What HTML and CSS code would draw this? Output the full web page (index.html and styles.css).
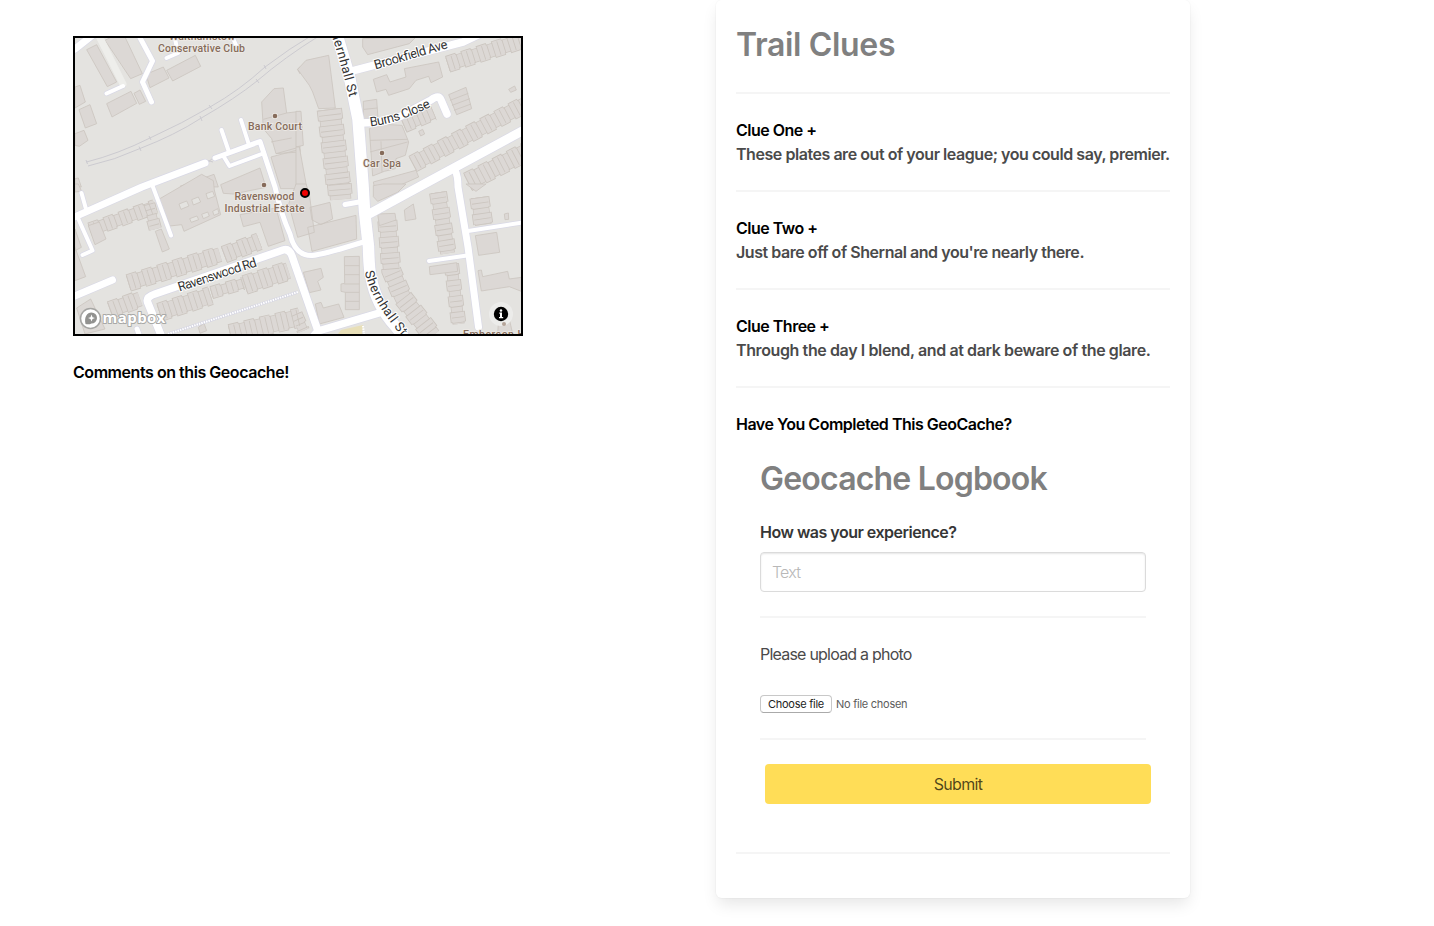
FILE: index.html
```html
<!DOCTYPE html>
<html lang="en">
<head>
<meta charset="utf-8">
<title>Trail Clues</title>
<link rel="stylesheet" href="styles.css">
</head>
<body>
<main class="page">
  <section class="left">
    <div class="map">
      <svg class="map-canvas" viewBox="75 38 446 296" width="446" height="296" role="img" aria-label="Map">
        <defs>
          <g id="blocks">
            <g transform="translate(70 32) scale(.33333)">
              <path d="M50 53L80 38L140 150L112 164ZM105 25L130 12L165 15L217 125L182 140ZM15 165L30 160L46 210L15 228ZM27 233L60 218L80 275L46 288ZM15 305L42 295L54 325L28 343L15 340ZM110 215L183 178L200 214L126 255ZM192 184L210 174L227 208L208 217ZM228 127L280 105L297 138L240 167ZM290 115L376 70L392 103L308 147ZM575 210L612 170L640 168L650 243L690 238L690 360L618 365L605 320L580 290ZM603 375L690 352L690 470L632 470ZM330 463L432 427L445 465ZM15 440L25 438L34 465L15 465ZM682 112L690 105L690 125Z"/>
              <path d="M580 262L650 243M618 365L690 345M603 330L665 318"/>
            </g>
            <g transform="translate(296 32) scale(.33333)">
              <path d="M5 112L30 85L98 70L118 228L68 230L50 180L40 160ZM0 238L15 238L22 340L0 345ZM0 345L10 345L32 465L0 465ZM200 20L360 15L340 35L215 68L200 45ZM232 142L272 128L282 150L330 135L325 110L428 90L440 135L405 152L398 133L360 145L340 170L278 190L270 172L242 180ZM202 208L242 202L246 260L202 262ZM220 290L245 276L318 280L338 330L328 370L300 380L298 410L265 418L230 432ZM368 298L380 292L386 306L374 312ZM638 172L656 162L661 174L644 181ZM458 188L510 166L527 230L482 248ZM232 450L360 415L368 435L300 465L235 465Z"/>
              <path d="M222 325L335 322M222 360L335 330M255 328L258 420M462 205L517 184M468 220L522 200M474 235L525 216M204 232L244 228"/>
            </g>
            <g transform="translate(70 184) scale(.33333)">
              <path d="M55 125L88 114L108 165L75 182ZM256 142L274 135L298 195L277 204ZM15 190L47 278L15 290ZM15 135L34 190L15 200ZM268 45L395 -29L430 -10L433 18L452 92L342 142L335 122L300 126ZM452 2L570 -48L588 10L490 30L460 28ZM510 92L618 72L645 170L595 187L570 115L520 128ZM20 372L62 345L105 435L45 450ZM385 430L402 418L410 440L390 448ZM15 0L25 0L35 22L15 24Z"/>
              <path class="yard" d="M327 60L350 51L357 66L333 76ZM365 47L385 39L392 54L370 63ZM408 29L428 22L434 37L413 45ZM359 104L381 96L386 107L364 115ZM395 91L413 84L418 96L400 104ZM428 82L443 74L447 88L432 94Z"/>
            </g>
            <g transform="translate(296 184) scale(.33333)">
              <path d="M0 0L30 0L40 30L55 145L5 160L-22 60ZM42 70L102 55L110 105L75 122L48 108ZM35 130L180 94L182 165L48 202ZM325 78L352 60L360 105L328 110ZM245 90L297 88L300 108L250 125ZM538 155L602 145L611 205L548 214ZM625 90L637 87L638 106L627 107ZM546 260L556 258L560 278L635 262L640 285L676 280L676 322L640 308L556 321ZM22 265L75 253L82 280L65 292L75 318L40 326ZM58 360L75 355L82 372L128 360L144 400L70 420ZM145 218L190 217L190 377L148 377L148 325L135 322L135 300L146 298ZM400 248L482 236L485 262L402 272ZM610 370L630 360L650 450L605 450ZM232 5L260 0L330 0L305 25L245 52L232 38ZM510 0L570 0L540 22Z"/>
              <path d="M147 245H190M147 272H190M145 300H190M148 325H190M148 352H190"/>
            </g>
          </g>
          <g id="rows">
            <g transform="translate(296 32) scale(.33333)">
              <path class="row w44" d="M455 97L690 22"/>
              <path class="row w46" d="M350 396L690 216"/>
              <path class="row w52" d="M515 450L690 360"/>
              <path class="row w44" d="M322 278L412 240"/>
              <path class="row w66" d="M100 232L128 465"/>
            </g>
            <g transform="translate(70 184) scale(.33333)">
              <path class="row w36" d="M60 138L255 68"/>
              <path class="row w30" d="M236 60L256 135"/>
              <path class="row w46" d="M175 297L450 212"/>
              <path class="row w46" d="M462 212L568 172"/>
              <path class="row w46" d="M120 378L210 345"/>
              <path class="row w48" d="M268 385L422 335"/>
              <path class="row w30" d="M424 326L520 298"/>
              <path class="row w52" d="M524 303L655 260"/>
              <path class="row w52" d="M480 450L690 400"/>
            </g>
            <g transform="translate(296 184) scale(.33333)">
              <path class="row w60" d="M130 0L134 46"/>
              <path class="row w52" d="M274 110L286 260L320 340L410 455"/>
              <path class="row w46" d="M426 25L455 208"/>
              <path class="row w52" d="M550 40L562 122"/>
              <path class="row w36" d="M466 240L488 420"/>
              <path class="row w30" d="M0 390L22 440"/>
            </g>
          </g>
          <g id="roads">
            <path class="road r12" d="M335 30L338 38L349 75L358 119L363 185L364.500 211L368.500 247Q369 270 371 277Q376 305 396 327L406 340"/>
            <path class="road r8" d="M352 71L463 42L480 34"/>
            <path class="road r8" d="M361 123Q385 123 401 116L431 100Q439 94 441 100L447 114"/>
            <path class="road r9" d="M370 213.500L427 182.500L526 129"/>
            <path class="road r7" d="M455 170Q458 176 458 187L468 247L478.500 327"/>
            <path class="road r4" d="M468 231L526 222M429 261L467 255.500"/>
            <path class="road r5" d="M345 204.500L362 201.500M215 158L260 141.500L275 187Q281 214 290 234Q295 256 312 255.500Q322 255 365 241.500"/>
            <path class="road r4" d="M221.500 130L229 152M241 120L249 145M224 157L229.500 166L263 153.500"/>
            <path class="road r7" d="M205 163L142 187L70 219M70 298L112.500 280M99 30L75 49L68 53"/>
            <path class="road r4" d="M153 187L171 235.500M81.500 193L86 209M77.500 217L92.500 250.500L82.500 255M123 86L106.500 93.500M166.500 58L178 53L174 34M231 34L236 45"/>
            <path class="road r8" d="M163 340L147.500 302Q146 297 155 294L283 250Q289 248 292 256L318 331L379 313M318 331L310 340"/>
            <path class="road r5" d="M137 329L141 340M138 34L152.500 61L142.500 82L151.500 102"/>
          </g>
        </defs>
        <rect class="land" x="75" y="38" width="446" height="296"/>
        <path class="park" d="M338 334L341 330L363 325L362 334Z"/>
        <use href="#rows" class="teeth-edge"/>
        <use href="#rows" class="row-edge"/>
        <use href="#rows" class="teeth-fill"/>
        <use href="#rows" class="row-fill"/>
        <use href="#rows" class="row-lines"/>
        <use href="#blocks" class="blocks"/>
        <path class="rail" d="M86.500 162Q118 154 150 138Q183 123 210 107Q240 90 265 67Q290 48 314 34M88 166Q115 160 140 148.500Q175 135 200.500 118.500Q236 98 257 81Q285 57 319 36"/>
        <path class="rail" d="M86 160L87.500 164M149 136L151 140M139 146.500L141 151M209 105L212 109M200 116L202 121M264 65L266 69M256 79L259 83M206 160L213 162M207 163L213 158"/>
        <path class="path-edge" d="M168 334L298 292"/>
        <path class="path-dots" d="M168 334L298 292M363 326L364 334"/>
        <use href="#roads" class="casing"/>
        <path class="service" d="M98 34L123 84"/>
        <use href="#roads" class="surface"/>

        <g class="street">
          <path id="shern-a" d="M331 34L335.500 47L351 103"/>
          <path id="shern-b" d="M365 272Q371 302 406 341"/>
          <path id="brook" d="M375.500 69.500L455 46"/>
          <path id="burns" d="M370.500 126.500Q400 123 436 104"/>
          <path id="raven" d="M179.500 291.500L264 264"/>
          <text><textPath href="#shern-a" textLength="66">hernhall St</textPath></text>
          <text><textPath href="#shern-b" textLength="75">Shernhall St</textPath></text>
          <text><textPath href="#brook" textLength="76">Brookfield Ave</textPath></text>
          <text><textPath href="#burns" textLength="64">Burns Close</textPath></text>
          <text><textPath href="#raven" textLength="82">Ravenswood Rd</textPath></text>
        </g>
        <g class="place">
          <text x="169" y="40" textLength="66">Walthamstow</text>
          <text x="158" y="52" textLength="87">Conservative Club</text>
          <text x="248" y="130" textLength="54">Bank Court</text>
          <text x="363" y="167" textLength="38">Car Spa</text>
          <text x="234.500" y="199.500" textLength="60">Ravenswood</text>
          <text x="224.500" y="211.500" textLength="80">Industrial Estate</text>
          <text x="463" y="338" textLength="62">Emberson H</text>
          <circle cx="275" cy="116" r="2.300"/>
          <circle cx="382" cy="153" r="2.300"/>
          <circle cx="264" cy="185" r="2.300"/>
        </g>
        <circle class="marker" cx="305" cy="193" r="4"/>

        <g class="logo">
          <circle class="logo-ring" cx="90.500" cy="318.500" r="10"/>
          <path class="logo-pin" d="M85.500 324C84 317 87 312.500 91.500 312.500A5.500 5.500 0 0 1 91.500 323.500C89.500 324.500 87.500 324.500 85.500 324Z"/>
          <path class="logo-star" d="M91.500 314.500L92.500 317.200L95 318L92.500 319L91.500 321.500L90.500 319L88 318L90.500 317.200Z"/>
          <text x="102.500" y="323" textLength="63">mapbox</text>
        </g>
        <g class="info">
          <circle class="info-pad" cx="501" cy="314" r="12"/>
          <circle class="info-poi" cx="504" cy="324" r="2"/>
          <circle cx="501" cy="314" r="7.200"/>
          <path class="info-mark" d="M499.300 312.600H502V317H503.200V318.300H499V317H500V313.800H499.300Z"/>
          <circle class="info-mark" cx="501" cy="310.500" r="1.200"/>
        </g>
      </svg>
    </div>
    <p class="strong comments">Comments on this Geocache!</p>
  </section>

  <section class="box">
    <h1 class="title main-title">Trail Clues</h1>
    <hr>
    <div class="clue"><p class="strong">Clue One +</p><p class="hint">These plates are out of your league; you could say, premier.</p></div>
    <hr>
    <div class="clue"><p class="strong">Clue Two +</p><p class="hint">Just bare off of Shernal and you're nearly there.</p></div>
    <hr>
    <div class="clue"><p class="strong">Clue Three +</p><p class="hint hint-wide">Through the day I blend, and at dark beware of the glare.</p></div>
    <hr>
    <p class="strong">Have You Completed This GeoCache?</p>
    <form class="logbook">
      <h2 class="title">Geocache Logbook</h2>
      <label class="label" for="exp">How was your experience?</label>
      <input class="input" id="exp" type="text" placeholder="Text">
      <hr>
      <p class="upload">Please upload a photo</p>
      <div class="file"><button class="file-button" type="button">Choose file</button><span>No file chosen</span></div>
      <hr>
      <button class="submit" type="button">Submit</button>
    </form>
    <hr>
  </section>
</main>
</body>
</html>
```
FILE: styles.css
```css
* { box-sizing: border-box; }
body, h1, h2, p { margin: 0; }
body {
  background: #fff;
  color: #4a4a4a;
  font: 400 16px/24px Inter, "Liberation Sans", sans-serif;
  letter-spacing: -0.5px;
  height: 926px;
  overflow: hidden;
}
.page { display: flex; align-items: flex-start; padding-left: 73px; }
.left { width: 643px; padding-top: 36px; }
.map { width: 450px; height: 300px; border: 2px solid #000; overflow: hidden; }
.map-canvas { display: block; }
.comments { margin-top: 24px; letter-spacing: -0.45px; }
.strong { color: #000; font-weight: 600; }
.hint { font-weight: 600; white-space: nowrap; letter-spacing: -0.45px; }
.hint-wide { letter-spacing: -0.39px; }

.box {
  width: 474px;
  height: 898px;
  padding: 20px;
  border-radius: 6px;
  box-shadow: 0 8px 16px -2px rgba(10,10,10,.1), 0 0 0 1px rgba(10,10,10,.02);
}
hr { height: 2px; margin: 24px 0; border: 0; background: #f5f5f5; }
.title {
  height: 36px;
  padding-top: 1px;
  color: #808080;
  font-size: 32px;
  line-height: 36px;
  font-weight: 600;
  letter-spacing: -0.8px;
}
.main-title { height: 48px; line-height: 48px; letter-spacing: -0.35px; }
.logbook { padding: 24px; }
.label { display: block; margin: 24px 0 8px; color: #363636; font-weight: 600; }
.input {
  display: block;
  width: 100%;
  height: 40px;
  padding: 0 11px;
  border: 1px solid #dbdbdb;
  border-radius: 4px;
  box-shadow: inset 0 1px 2px rgba(10,10,10,.1);
  font: inherit;
  font-weight: 300;
  letter-spacing: -0.8px;
}
.input::placeholder { color: #b8b8b8; opacity: 1; }
.upload { letter-spacing: -0.78px; }
.file {
  display: flex;
  align-items: center;
  gap: 4px;
  height: 18px;
  margin: 29px 0 25px;
  font-size: 11px;
  letter-spacing: -0.26px;
  color: #5c5c5c;
}
.file-button {
  width: 72px;
  height: 18px;
  padding: 0;
  border: 1px solid #c8c8c8;
  border-bottom-color: #aaa;
  border-radius: 4px;
  background: #fff;
  color: #222;
  font: inherit;
  line-height: 16px;
  letter-spacing: inherit;
}
.submit {
  display: block;
  width: 100%;
  height: 40px;
  position: relative;
  left: 5px;
  border: 0;
  border-radius: 4px;
  background: #ffdd57;
  color: rgba(0,0,0,.7);
  font: inherit;
  letter-spacing: -0.65px;
}

.land { fill: #e4e3e0; }
.park { fill: #e8dfb8; }
.blocks { fill: #dcd8d5; stroke: #cbc5bf; stroke-width: 2.5px; }
.yard { fill: #e4e3e0; }
.row { fill: none; stroke-width: calc(var(--w) + var(--edge)); }
.w30 { --w: 26px; }
.w36 { --w: 32px; }
.w44 { --w: 38px; }
.w46 { --w: 40px; }
.w48 { --w: 44px; }
.w52 { --w: 46px; }
.w60 { --w: 60px; }
.w66 { --w: 62px; }
.teeth-edge { stroke: #cbc5bf; --edge: 14px; stroke-dasharray: 32 16; }
.row-edge { stroke: #cbc5bf; --edge: 4px; }
.teeth-fill { stroke: #dcd8d5; --edge: 9px; stroke-dasharray: 28 20; stroke-dashoffset: -2; }
.row-fill { stroke: #dcd8d5; --edge: 0px; }
.row-lines { stroke: #cbc5bf; --edge: 4px; stroke-dasharray: 2.5 13.5; }
.rail { fill: none; stroke: #c5c4cb; stroke-width: .8px; }
.path-edge { stroke: #d5d5e2; stroke-width: 3px; }
.path-dots { stroke: #fff; stroke-width: 2px; stroke-dasharray: 1.5 1; }
.road { fill: none; stroke-linecap: round; stroke-linejoin: round; stroke-width: calc(var(--r) + var(--case)); }
.r4 { --r: 4px; }
.r5 { --r: 5px; }
.r7 { --r: 7px; }
.r8 { --r: 7.5px; }
.r9 { --r: 9px; }
.r12 { --r: 11.5px; }
.casing { stroke: #d9d9e6; --case: 1.4px; }
.surface { stroke: #fff; --case: 0px; }
.service { stroke: #eeeeeb; stroke-width: 7px; stroke-linecap: round; }
.street path { fill: none; }
.street text { font: 400 13px Roboto, sans-serif; letter-spacing: 0; fill: #333; stroke: #fff; stroke-width: 2px; paint-order: stroke; }
.place { fill: #866b5a; stroke: #eeebe7; stroke-width: 1.5px; paint-order: stroke; }
.place text { font: 500 10.5px Roboto, sans-serif; letter-spacing: 0; }
.marker { fill: #f00000; stroke: #000; stroke-width: 2px; }
.logo-ring { fill: #fff; stroke: #a5a5a3; stroke-width: 1.5px; }
.logo-pin { fill: #929290; }
.logo-star { fill: #fff; }
.logo text { font: 700 15px "Open Sans", sans-serif; letter-spacing: 0; fill: #fff; stroke: #a9a9a7; stroke-width: 2px; stroke-linejoin: round; paint-order: stroke; }
.info-pad { fill: #ececea; }
.info-mark { fill: #fff; }
.info-poi { fill: #b5a499; }
```
